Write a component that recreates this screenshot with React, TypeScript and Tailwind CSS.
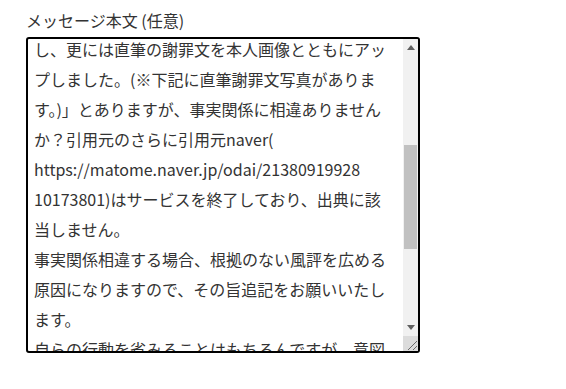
import React from "react";

const lines = [
  "し、更には直筆の謝罪文を本人画像とともにアッ",
  "プしました。(※下記に直筆謝罪文写真がありま",
  "す。)」とありますが、事実関係に相違ありません",
  "か？引用元のさらに引用元naver(",
  "https://matome.naver.jp/odai/21380919928",
  "10173801)はサービスを終了しており、出典に該",
  "当しません。",
  "事実関係相違する場合、根拠のない風評を広める",
  "原因になりますので、その旨追記をお願いいたし",
  "ます。",
  "自らの行動を省みることはもちろんですが、意図",
];

export default function App() {
  return (
    <div className="w-[566px] h-[389px] bg-white pl-[26px] pt-[8px] font-['Noto_Sans_CJK_JP','Noto_Sans',sans-serif]">
      <div className="text-[16px] leading-[24px] text-[#333]">メッセージ本文 (任意)</div>
      <div className="mt-[5px] w-[394px] h-[316px] border-2 border-black rounded-[3px] flex overflow-hidden bg-white">
        <div className="flex-1 overflow-hidden pl-[6px]">
          <div className="-mt-[5px] text-[16px] leading-[30px] text-[#333] whitespace-nowrap">
            {lines.map((l, i) => (
              <div key={i}>{l}</div>
            ))}
          </div>
        </div>
        <div className="w-[15px] bg-[#f1f1f1] flex flex-col">
          <div className="h-[17px] flex items-center justify-center">
            <svg width="8" height="5" viewBox="0 0 8 5">
              <polygon points="4,0 8,5 0,5" fill="#606060" />
            </svg>
          </div>
          <div className="flex-1">
            <div className="mt-[89px] h-[104px] mx-[1px] bg-[#c1c1c1]" />
          </div>
          <div className="h-[17px] flex items-center justify-center">
            <svg width="8" height="5" viewBox="0 0 8 5">
              <polygon points="0,0 8,0 4,5" fill="#606060" />
            </svg>
          </div>
          <div className="h-[15px] bg-[#dcdcdc] relative">
            <svg width="15" height="15" viewBox="0 0 15 15" className="absolute inset-0">
              <line x1="14" y1="5" x2="5" y2="14" stroke="#6b6b6b" strokeWidth="1" />
              <line x1="14" y1="10" x2="10" y2="14" stroke="#6b6b6b" strokeWidth="1" />
            </svg>
          </div>
        </div>
      </div>
    </div>
  );
}
